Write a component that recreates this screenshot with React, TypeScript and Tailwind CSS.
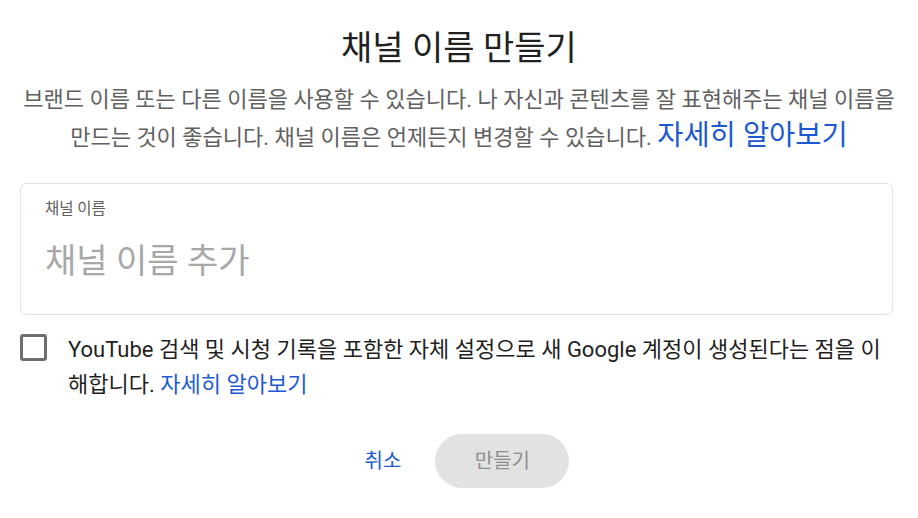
import React from "react";

export default function App() {
  const font = { fontFamily: 'Roboto, "Noto Sans CJK KR", "Noto Sans", sans-serif' };
  return (
    <div className="w-[918px] h-[518px] bg-white flex flex-col items-center overflow-hidden" style={font}>
      <h1 className="mt-[28px] text-[34px] leading-[40px] text-[#212121] font-normal">채널 이름 만들기</h1>
      <p className="mt-[14px] px-[16px] w-full text-center text-[22px] leading-[36px] text-[#606060]">
        브랜드 이름 또는 다른 이름을 사용할 수 있습니다. 나 자신과 콘텐츠를 잘 표현해주는 채널 이름을
        <br />
        만드는 것이 좋습니다. 채널 이름은 언제든지 변경할 수 있습니다.{" "}
        <span className="text-[28.5px] text-[#1d5ad1]">자세히 알아보기</span>
      </p>
      <div className="w-full pl-[20px] mt-[27px]">
        <div className="w-[873px] h-[132px] border border-[#e3e3e3] rounded-[6px] px-[24px] pt-[15px] flex flex-col">
          <div className="text-[15.5px] leading-[20px] text-[#606060]">채널 이름</div>
          <div className="mt-[22px] text-[34px] leading-[40px] text-[#a8a8a8]">채널 이름 추가</div>
        </div>
      </div>
      <div className="mt-[17px] w-[878px] flex items-start gap-[21px]">
        <div className="mt-[2px] shrink-0 w-[27px] h-[27px] border-[3px] border-[#6e6e6e] rounded-[3px]" />
        <p className="text-[22px] leading-[35px] text-[#1f1f1f]">
          YouTube 검색 및 시청 기록을 포함한 자체 설정으로 새 Google 계정이 생성된다는 점을 이해합니다.{" "}
          <span className="text-[#1d5ad1]">자세히 알아보기</span>
        </p>
      </div>
      <div className="mt-[32px] flex items-center gap-[18px]">
        <button className="px-[16px] h-[54px] text-[20px] text-[#1d5ad1]">취소</button>
        <button className="w-[134px] h-[54px] rounded-full bg-[#e2e2e2] text-[20px] text-[#8e8e8e]">만들기</button>
      </div>
    </div>
  );
}
